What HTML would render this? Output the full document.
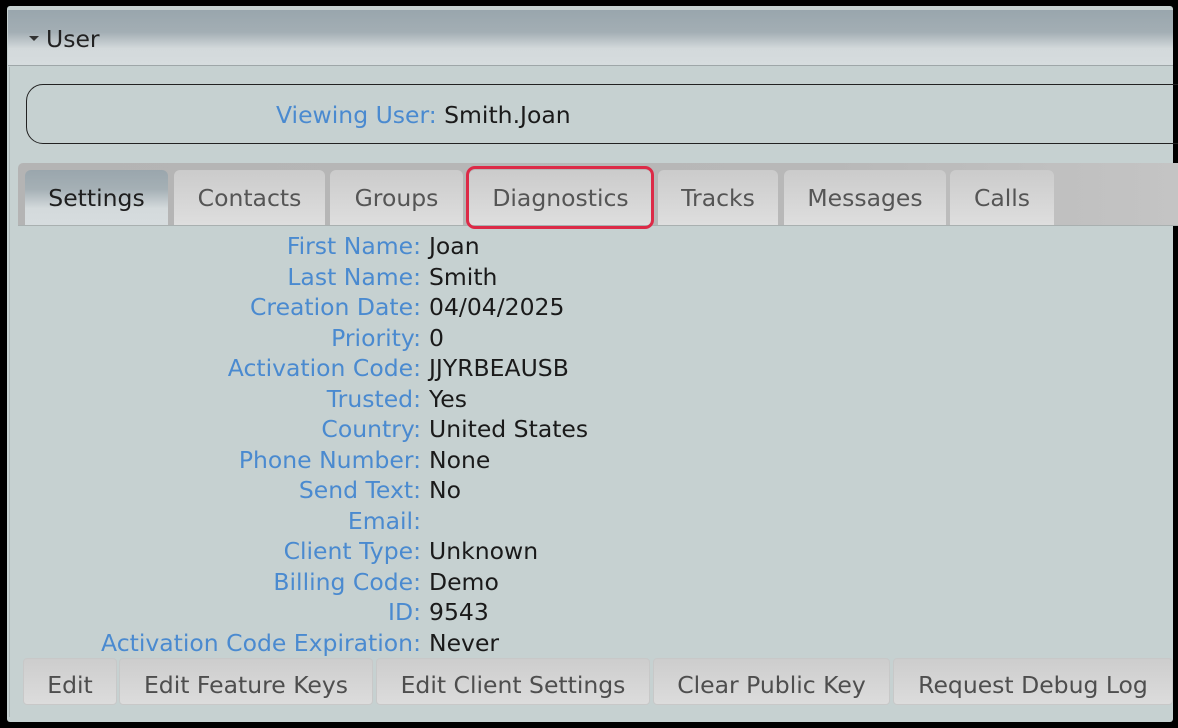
<!DOCTYPE html>
<html><head><style>
body{margin:0;width:1178px;height:728px;background:#000;position:relative;overflow:hidden;font-family:"DejaVu Sans","Liberation Sans",sans-serif;}
.a{position:absolute}
#panel{left:7px;top:6px;width:1166px;height:716px;background:#c6d1d1;border-radius:3px;}
#hdr{left:8px;top:10px;width:1165px;height:55px;background:linear-gradient(#99a6ad 0%,#a3aeb4 40%,#d3d9db 70%,#d6dcde 100%);border-bottom:1px solid #9ea6a8;}
#hdr span{position:absolute;left:38px;top:15px;font-size:23.5px;color:#222}
#tri{left:29px;top:36px;width:0;height:0;border-left:5px solid transparent;border-right:5px solid transparent;border-top:5px solid #333}
#side{left:9px;top:67px;width:1px;height:650px;background:#aeb8b8}
#view{left:26px;top:84px;width:1170px;height:58px;border:1px solid #222;border-radius:17px;}
#view div{position:absolute;left:249px;top:16px;font-size:23.5px;color:#4a8ad0;white-space:nowrap}
#view b{font-weight:normal;color:#1a1a1a}
#tabbar{left:18px;top:163px;width:1160px;height:62px;background:linear-gradient(90deg,#b4b4b4,#b8b8b8 70%,#c4c4c4);border-radius:5px 0 0 0;border-bottom:1px solid #a9b0b0}
.tab{position:absolute;top:170px;height:55px;background:linear-gradient(#cbcbcb,#dedede);border-radius:6px 6px 0 0;font-size:23.5px;color:#555;text-align:center;line-height:57px}
.tab.sel{background:linear-gradient(#9aa6ad,#a5b0b5 35%,#d4dadc 70%,#d6dcde);color:#1e1e1e}
#red{left:466px;top:166px;width:182px;height:57px;border:3px solid #dc2a47;border-radius:9px}
.row{position:absolute;left:0;width:1178px;font-size:23.5px;height:30px;white-space:nowrap}
.row .l{position:absolute;right:757px;color:#4a8ad0}
.row .v{position:absolute;left:429px;color:#1a1a1a}
.btn{position:absolute;top:658px;height:47px;background:linear-gradient(#cdcdcd,#dcdcdc);border:1px solid #c8c8c8;border-radius:4px;font-size:23.5px;color:#4e4e4e;text-align:center;line-height:52px;box-sizing:border-box;white-space:nowrap}
</style></head><body>
<div class="a" id="panel"></div>
<div class="a" id="hdr"><span>User</span></div>
<div class="a" id="tri"></div>
<div class="a" id="side"></div>
<div class="a" id="view"><div>Viewing User: <b>Smith.Joan</b></div></div>
<div class="a" id="tabbar"></div>
<div class="tab sel" style="left:25px;width:143px">Settings</div>
<div class="tab" style="left:174px;width:151px">Contacts</div>
<div class="tab" style="left:330px;width:133px">Groups</div>
<div class="tab" style="left:469px;width:183px">Diagnostics</div>
<div class="tab" style="left:658px;width:120px">Tracks</div>
<div class="tab" style="left:784px;width:162px">Messages</div>
<div class="tab" style="left:950px;width:104px">Calls</div>
<div class="a" id="red"></div>
<div class="row" style="top:232px"><span class="l">First Name:</span><span class="v">Joan</span></div>
<div class="row" style="top:263px"><span class="l">Last Name:</span><span class="v">Smith</span></div>
<div class="row" style="top:293px"><span class="l">Creation Date:</span><span class="v">04/04/2025</span></div>
<div class="row" style="top:324px"><span class="l">Priority:</span><span class="v">0</span></div>
<div class="row" style="top:354px"><span class="l">Activation Code:</span><span class="v">JJYRBEAUSB</span></div>
<div class="row" style="top:385px"><span class="l">Trusted:</span><span class="v">Yes</span></div>
<div class="row" style="top:415px"><span class="l">Country:</span><span class="v">United States</span></div>
<div class="row" style="top:446px"><span class="l">Phone Number:</span><span class="v">None</span></div>
<div class="row" style="top:476px"><span class="l">Send Text:</span><span class="v">No</span></div>
<div class="row" style="top:507px"><span class="l">Email:</span><span class="v"></span></div>
<div class="row" style="top:537px"><span class="l">Client Type:</span><span class="v">Unknown</span></div>
<div class="row" style="top:568px"><span class="l">Billing Code:</span><span class="v">Demo</span></div>
<div class="row" style="top:598px"><span class="l">ID:</span><span class="v">9543</span></div>
<div class="row" style="top:629px"><span class="l">Activation Code Expiration:</span><span class="v">Never</span></div>
<div class="btn" style="left:23px;width:94px">Edit</div>
<div class="btn" style="left:119px;width:254px">Edit Feature Keys</div>
<div class="btn" style="left:376px;width:274px">Edit Client Settings</div>
<div class="btn" style="left:653px;width:237px">Clear Public Key</div>
<div class="btn" style="left:893px;width:280px">Request Debug Log</div>
</body></html>
